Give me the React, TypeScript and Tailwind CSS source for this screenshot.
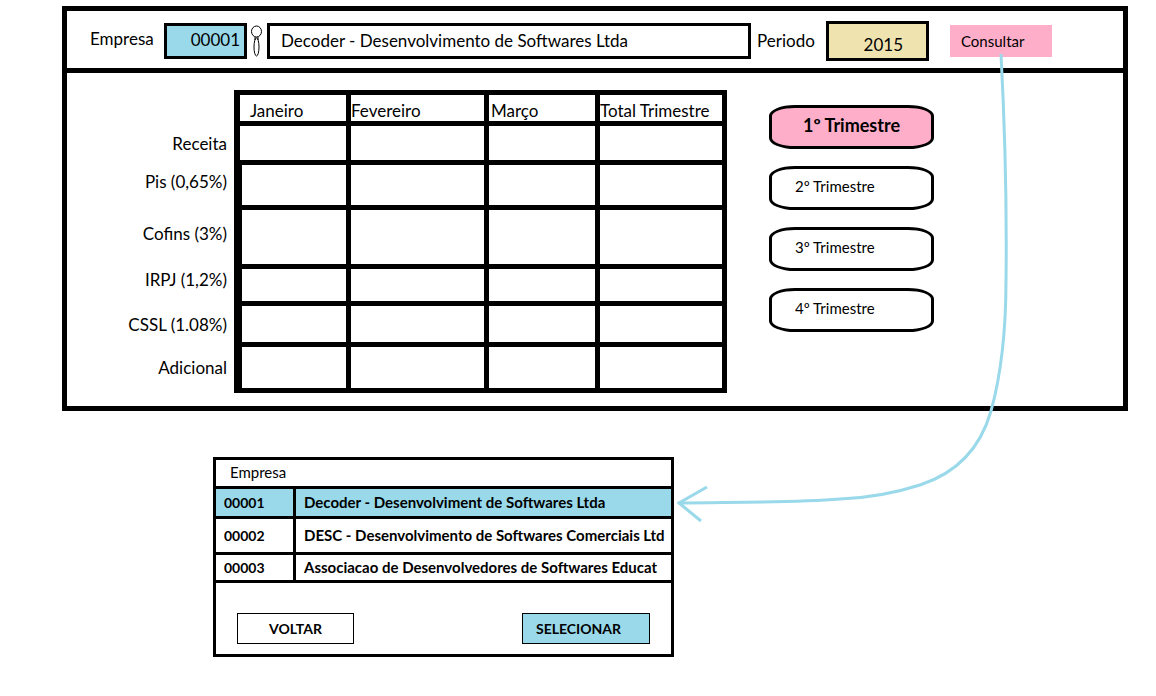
import React, { useState } from "react";

const months = [
  { name: "Janeiro", cell: "border-l-[6px] pl-[10px]" },
  { name: "Fevereiro", cell: "" },
  { name: "Março", cell: "pl-[2px]" },
  { name: "Total Trimestre", cell: "" },
];

const taxes = [
  { name: "Receita", row: "h-[39px]", label: "pb-1", edge: "border-l-[6px]" },
  { name: "Pis (0,65%)", row: "h-[45px]", label: "pb-3", edge: "border-l-[8px]" },
  { name: "Cofins (3%)", row: "h-[59px]", label: "pb-3", edge: "border-l-[8px]" },
  { name: "IRPJ (1,2%)", row: "h-[37px]", label: "pb-4", edge: "border-l-[8px]" },
  { name: "CSSL (1.08%)", row: "h-[41px]", label: "pb-1", edge: "border-l-[8px]" },
  { name: "Adicional", row: "h-[46px]", label: "pb-1", edge: "border-l-[8px]" },
];

const quarters = ["1º Trimestre", "2º Trimestre", "3º Trimestre", "4º Trimestre"];

const companies = [
  { code: "00001", name: "Decoder - Desenvolviment de Softwares Ltda", row: "h-[30px]" },
  { code: "00002", name: "DESC - Desenvolvimento de Softwares Comerciais Ltd", row: "h-[36px]" },
  { code: "00003", name: "Associacao de Desenvolvedores de Softwares Educat", row: "h-[28px]" },
];

function SearchBar() {
  return (
    <header className="flex h-[62px] items-center border-b-[5px] border-black pt-[2px] pl-[23px] pr-[71px]">
      <label htmlFor="company" className="w-[74px] shrink-0 pb-1">
        Empresa
      </label>
      <input
        id="company"
        defaultValue="00001"
        className="h-9 w-[83px] shrink-0 border-[3px] border-black bg-[#99d9ea] pr-1 pb-[2px] text-right outline-none"
      />
      <button type="button" aria-label="Buscar empresa" className="mx-1 shrink-0">
        <svg width="12" height="32" viewBox="0 0 12 32" fill="none" stroke="black" strokeWidth="1">
          <ellipse cx="5.5" cy="6.5" rx="5" ry="5.5" />
          <path d="M4 12v3M7 12v3" />
          <ellipse cx="5.5" cy="22" rx="2.5" ry="9" />
        </svg>
      </button>
      <input
        aria-label="Nome da empresa"
        defaultValue="Decoder - Desenvolvimento de Softwares Ltda"
        className="h-9 min-w-0 flex-1 border-[3px] border-black bg-white pl-[11px] outline-none"
      />
      <label htmlFor="period" className="w-[75px] shrink-0 pl-[6px]">
        Periodo
      </label>
      <input
        id="period"
        defaultValue="2015"
        className="h-10 w-[103px] shrink-0 border-[3px] border-black bg-[#efe4b0] pt-2 pr-[23px] text-right outline-none"
      />
      <button
        type="button"
        className="ml-[21px] h-8 w-[102px] shrink-0 bg-[#ffaec9] pl-[11px] text-left text-[15px]"
      >
        Consultar
      </button>
    </header>
  );
}

function TaxTable() {
  return (
    <table className="w-[660px] shrink-0 table-fixed border-separate border-spacing-0 leading-5">
      <colgroup>
        <col className="w-[167px]" />
        <col className="w-[117px]" />
        <col className="w-[138px]" />
        <col className="w-[111px]" />
        <col className="w-[127px]" />
      </colgroup>
      <thead>
        <tr className="h-9">
          <td />
          {months.map((m) => (
            <th
              key={m.name}
              scope="col"
              className={`border-y-[5px] border-r-[5px] border-black p-0 text-left align-bottom font-normal whitespace-nowrap ${m.cell}`}
            >
              {m.name}
            </th>
          ))}
        </tr>
      </thead>
      <tbody>
        {taxes.map((t) => (
          <tr key={t.name} className={t.row}>
            <th scope="row" className={`pt-0 pr-[7px] text-right font-normal ${t.label}`}>
              {t.name}
            </th>
            <td className={`border-r-[5px] border-b-[5px] border-black p-0 ${t.edge}`} />
            <td className="border-r-[5px] border-b-[5px] border-black p-0" />
            <td className="border-r-[5px] border-b-[5px] border-black p-0" />
            <td className="border-r-[5px] border-b-[5px] border-black p-0" />
          </tr>
        ))}
      </tbody>
    </table>
  );
}

function Quarters() {
  const [active, setActive] = useState(0);
  return (
    <nav className="mt-[15px] ml-[42px] flex w-[165px] flex-col gap-[17px]">
      {quarters.map((q, i) => (
        <button
          key={q}
          type="button"
          onClick={() => setActive(i)}
          className={
            i === active
              ? "h-11 rounded-[26px/11px] border-[3px] border-black bg-[#ffaec9] pb-1 text-center text-lg font-bold"
              : "h-11 rounded-[26px/11px] border-[3px] border-black bg-white pb-1 pl-[23px] text-left text-[15px]"
          }
        >
          {q}
        </button>
      ))}
    </nav>
  );
}

function CompanyPicker() {
  const [selected, setSelected] = useState("00001");
  return (
    <section className="mt-[46px] ml-[213px] w-[461px] border-[3px] border-black text-sm">
      <h2 className="flex h-[29px] items-center border-b-[3px] border-black pl-[14px] text-[15px]">
        Empresa
      </h2>
      <table className="w-full table-fixed border-separate border-spacing-0 font-bold">
        <colgroup>
          <col className="w-20" />
          <col />
        </colgroup>
        <tbody>
          {companies.map((c) => (
            <tr
              key={c.code}
              onClick={() => setSelected(c.code)}
              className={c.code === selected ? `${c.row} bg-[#99d9ea]` : c.row}
            >
              <td className="border-r-[3px] border-b-[3px] border-black py-0 pr-0 pl-2">{c.code}</td>
              <td className="border-b-[3px] border-black py-0 pr-0 pl-2 text-[15px] whitespace-nowrap">
                {c.name}
              </td>
            </tr>
          ))}
        </tbody>
      </table>
      <div className="flex justify-between px-[21px] pt-[30px] pb-[10px] font-bold">
        <button type="button" className="h-[31px] w-[117px] border border-black bg-white">
          VOLTAR
        </button>
        <button
          type="button"
          className="h-[31px] w-32 border border-black bg-[#99d9ea] pl-[13px] text-left"
        >
          SELECIONAR
        </button>
      </div>
    </section>
  );
}

function LinkArrow() {
  return (
    <svg
      className="pointer-events-none absolute top-0 left-0"
      width="1020"
      height="540"
      viewBox="0 0 1020 540"
      fill="none"
      stroke="#99d9ea"
      strokeWidth="3"
      aria-hidden="true"
    >
      <path d="M1001 54C1005 130 1007 200 1006 280C1006 330 1001 375 991 411C981 446 960 472 920 485C895 493 868 498 840 499C790 503 730 502 678 503" />
      <path d="M707 487L679 503L701 521" />
    </svg>
  );
}

export default function App() {
  return (
    <main className="relative min-h-screen bg-white pt-[6px] pb-10 font-['Lato','Liberation_Sans',sans-serif] text-[17px] leading-6 text-black">
      <section className="mr-7 ml-[62px] border-[5px] border-black">
        <SearchBar />
        <div className="flex items-start pt-[17px] pb-[13px]">
          <TaxTable />
          <Quarters />
        </div>
      </section>
      <CompanyPicker />
      <LinkArrow />
    </main>
  );
}
